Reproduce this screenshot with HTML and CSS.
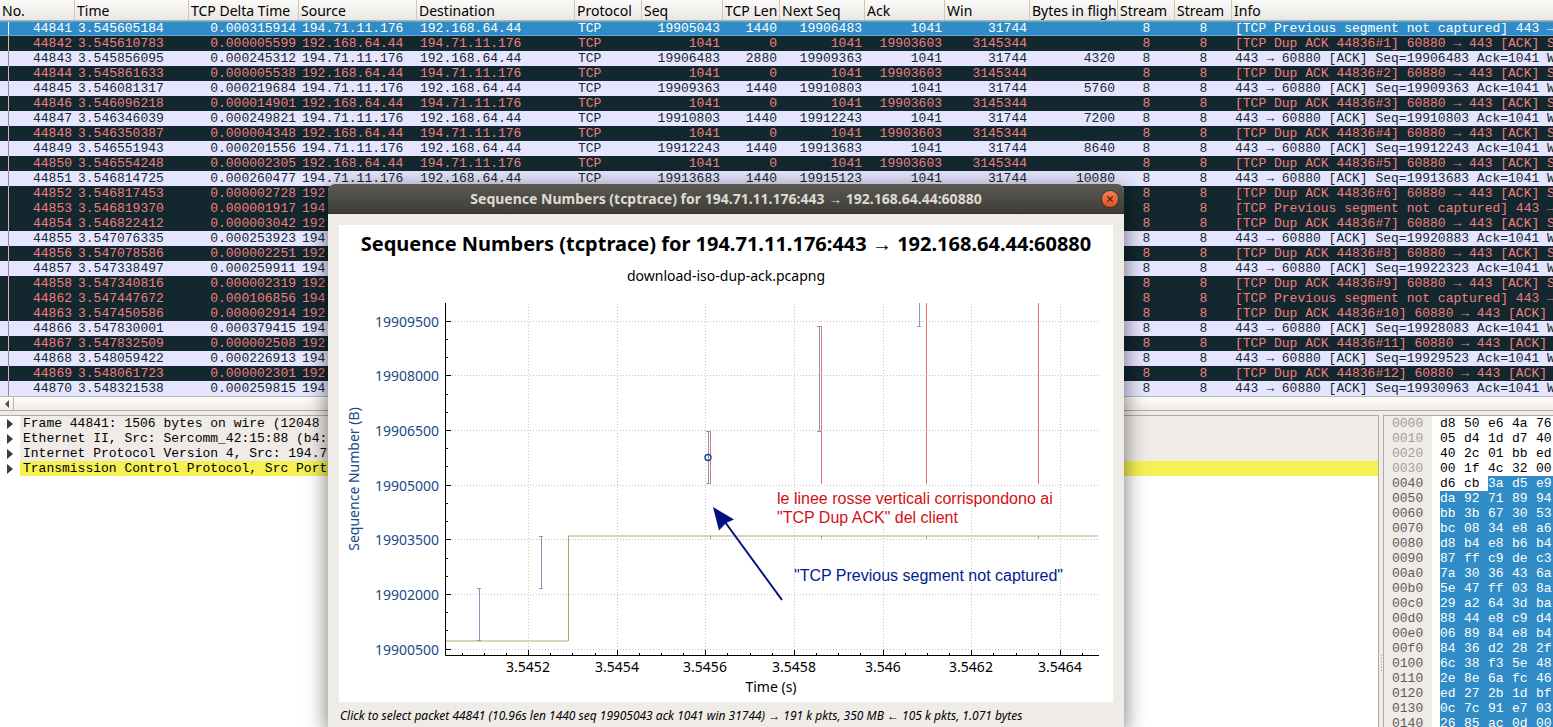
FILE: index.html
```
<!DOCTYPE html>
<html lang="it">
<head>
<meta charset="utf-8">
<title>Sequence Numbers (tcptrace)</title>
<link rel="stylesheet" href="styles.css">
</head>
<body>
<main class="app">
<section class="packets">
<table class="packet-list">
<colgroup><col class="w-no"><col class="w-time"><col class="w-delta"><col class="w-src"><col class="w-dst"><col class="w-proto"><col class="w-seq"><col class="w-len"><col class="w-next"><col class="w-ack"><col class="w-win"><col class="w-bytes"><col class="w-stream"><col class="w-stream"><col></colgroup>
<thead><tr><th>No.</th><th>Time</th><th>TCP Delta Time</th><th>Source</th><th>Destination</th><th>Protocol</th><th>Seq</th><th>TCP Len</th><th>Next Seq</th><th>Ack</th><th>Win</th><th>Bytes in flight</th><th>Stream</th><th>Stream</th><th>Info</th></tr></thead>
<tbody>
<tr class="selected"><td>44841<td>3.545605184<td>0.000315914<td>194.71.11.176<td>192.168.64.44<td>TCP<td>19905043<td>1440<td>19906483<td>1041<td>31744<td><td>8<td>8<td>[TCP Previous segment not captured] 443 → 60880</tr>
<tr class="bad"><td>44842<td>3.545610783<td>0.000005599<td>192.168.64.44<td>194.71.11.176<td>TCP<td>1041<td>0<td>1041<td>19903603<td>3145344<td><td>8<td>8<td>[TCP Dup ACK 44836#1] 60880 → 443 [ACK] Seq=1041</tr>
<tr><td>44843<td>3.545856095<td>0.000245312<td>194.71.11.176<td>192.168.64.44<td>TCP<td>19906483<td>2880<td>19909363<td>1041<td>31744<td>4320<td>8<td>8<td>443 → 60880 [ACK] Seq=19906483 Ack=1041 Win=31744</tr>
<tr class="bad"><td>44844<td>3.545861633<td>0.000005538<td>192.168.64.44<td>194.71.11.176<td>TCP<td>1041<td>0<td>1041<td>19903603<td>3145344<td><td>8<td>8<td>[TCP Dup ACK 44836#2] 60880 → 443 [ACK] Seq=1041</tr>
<tr><td>44845<td>3.546081317<td>0.000219684<td>194.71.11.176<td>192.168.64.44<td>TCP<td>19909363<td>1440<td>19910803<td>1041<td>31744<td>5760<td>8<td>8<td>443 → 60880 [ACK] Seq=19909363 Ack=1041 Win=31744</tr>
<tr class="bad"><td>44846<td>3.546096218<td>0.000014901<td>192.168.64.44<td>194.71.11.176<td>TCP<td>1041<td>0<td>1041<td>19903603<td>3145344<td><td>8<td>8<td>[TCP Dup ACK 44836#3] 60880 → 443 [ACK] Seq=1041</tr>
<tr><td>44847<td>3.546346039<td>0.000249821<td>194.71.11.176<td>192.168.64.44<td>TCP<td>19910803<td>1440<td>19912243<td>1041<td>31744<td>7200<td>8<td>8<td>443 → 60880 [ACK] Seq=19910803 Ack=1041 Win=31744</tr>
<tr class="bad"><td>44848<td>3.546350387<td>0.000004348<td>192.168.64.44<td>194.71.11.176<td>TCP<td>1041<td>0<td>1041<td>19903603<td>3145344<td><td>8<td>8<td>[TCP Dup ACK 44836#4] 60880 → 443 [ACK] Seq=1041</tr>
<tr><td>44849<td>3.546551943<td>0.000201556<td>194.71.11.176<td>192.168.64.44<td>TCP<td>19912243<td>1440<td>19913683<td>1041<td>31744<td>8640<td>8<td>8<td>443 → 60880 [ACK] Seq=19912243 Ack=1041 Win=31744</tr>
<tr class="bad"><td>44850<td>3.546554248<td>0.000002305<td>192.168.64.44<td>194.71.11.176<td>TCP<td>1041<td>0<td>1041<td>19903603<td>3145344<td><td>8<td>8<td>[TCP Dup ACK 44836#5] 60880 → 443 [ACK] Seq=1041</tr>
<tr><td>44851<td>3.546814725<td>0.000260477<td>194.71.11.176<td>192.168.64.44<td>TCP<td>19913683<td>1440<td>19915123<td>1041<td>31744<td>10080<td>8<td>8<td>443 → 60880 [ACK] Seq=19913683 Ack=1041 Win=31744</tr>
<tr class="bad"><td>44852<td>3.546817453<td>0.000002728<td>192.168.64.44<td><td><td><td><td><td><td><td><td>8<td>8<td>[TCP Dup ACK 44836#6] 60880 → 443 [ACK] Seq=1041</tr>
<tr class="bad"><td>44853<td>3.546819370<td>0.000001917<td>194.71.11.176<td><td><td><td><td><td><td><td><td>8<td>8<td>[TCP Previous segment not captured] 443 → 60880</tr>
<tr class="bad"><td>44854<td>3.546822412<td>0.000003042<td>192.168.64.44<td><td><td><td><td><td><td><td><td>8<td>8<td>[TCP Dup ACK 44836#7] 60880 → 443 [ACK] Seq=1041</tr>
<tr><td>44855<td>3.547076335<td>0.000253923<td>194.71.11.176<td><td><td><td><td><td><td><td><td>8<td>8<td>443 → 60880 [ACK] Seq=19920883 Ack=1041 Win=31744</tr>
<tr class="bad"><td>44856<td>3.547078586<td>0.000002251<td>192.168.64.44<td><td><td><td><td><td><td><td><td>8<td>8<td>[TCP Dup ACK 44836#8] 60880 → 443 [ACK] Seq=1041</tr>
<tr><td>44857<td>3.547338497<td>0.000259911<td>194.71.11.176<td><td><td><td><td><td><td><td><td>8<td>8<td>443 → 60880 [ACK] Seq=19922323 Ack=1041 Win=31744</tr>
<tr class="bad"><td>44858<td>3.547340816<td>0.000002319<td>192.168.64.44<td><td><td><td><td><td><td><td><td>8<td>8<td>[TCP Dup ACK 44836#9] 60880 → 443 [ACK] Seq=1041</tr>
<tr class="bad"><td>44862<td>3.547447672<td>0.000106856<td>194.71.11.176<td><td><td><td><td><td><td><td><td>8<td>8<td>[TCP Previous segment not captured] 443 → 60880</tr>
<tr class="bad"><td>44863<td>3.547450586<td>0.000002914<td>192.168.64.44<td><td><td><td><td><td><td><td><td>8<td>8<td>[TCP Dup ACK 44836#10] 60880 → 443 [ACK] Seq=1041</tr>
<tr><td>44866<td>3.547830001<td>0.000379415<td>194.71.11.176<td><td><td><td><td><td><td><td><td>8<td>8<td>443 → 60880 [ACK] Seq=19928083 Ack=1041 Win=31744</tr>
<tr class="bad"><td>44867<td>3.547832509<td>0.000002508<td>192.168.64.44<td><td><td><td><td><td><td><td><td>8<td>8<td>[TCP Dup ACK 44836#11] 60880 → 443 [ACK] Seq=1041</tr>
<tr><td>44868<td>3.548059422<td>0.000226913<td>194.71.11.176<td><td><td><td><td><td><td><td><td>8<td>8<td>443 → 60880 [ACK] Seq=19929523 Ack=1041 Win=31744</tr>
<tr class="bad"><td>44869<td>3.548061723<td>0.000002301<td>192.168.64.44<td><td><td><td><td><td><td><td><td>8<td>8<td>[TCP Dup ACK 44836#12] 60880 → 443 [ACK] Seq=1041</tr>
<tr><td>44870<td>3.548321538<td>0.000259815<td>194.71.11.176<td><td><td><td><td><td><td><td><td>8<td>8<td>443 → 60880 [ACK] Seq=19930963 Ack=1041 Win=31744</tr>
</tbody>
</table>
<div class="hscroll"><button class="scroll-left" type="button" aria-label="Scroll left"><svg width="4" height="8" viewBox="0 0 4 8"><path d="M4 0v8L0 4z" fill="#4c4c4c"/></svg></button></div>
</section>
<section class="panes">
<ul class="tree">
<li><button class="expander" type="button" aria-label="Expand"><svg width="6" height="10" viewBox="0 0 6 10"><path d="M0 0v10l6-5z"/></svg></button><span class="node">Frame 44841: 1506 bytes on wire (12048 bits)</span></li>
<li><button class="expander" type="button" aria-label="Expand"><svg width="6" height="10" viewBox="0 0 6 10"><path d="M0 0v10l6-5z"/></svg></button><span class="node">Ethernet II, Src: Sercomm_42:15:88 (b4:</span></li>
<li><button class="expander" type="button" aria-label="Expand"><svg width="6" height="10" viewBox="0 0 6 10"><path d="M0 0v10l6-5z"/></svg></button><span class="node">Internet Protocol Version 4, Src: 194.71.11.176</span></li>
<li><button class="expander" type="button" aria-label="Expand"><svg width="6" height="10" viewBox="0 0 6 10"><path d="M0 0v10l6-5z"/></svg></button><span class="node marked">Transmission Control Protocol, Src Port: 443</span></li>
</ul>
<div class="splitter"><svg width="3" height="17" viewBox="0 0 3 17"><path d="M1.500 0v17" stroke="#aaa59f" stroke-dasharray="1 2"/></svg></div>
<div class="hex-pane"><table class="hex">
<tr class="dim"><th>0000</th><td>d8<td>50<td>e6<td>4a<td>76</tr>
<tr class="dim"><th>0010</th><td>05<td>d4<td>1d<td>d7<td>40</tr>
<tr class="dim"><th>0020</th><td>40<td>2c<td>01<td>bb<td>ed</tr>
<tr class="dim"><th>0030</th><td>00<td>1f<td>4c<td>32<td>00</tr>
<tr><th>0040</th><td>d6<td>cb<td class="on">3a<td class="on">d5<td class="on">e9</tr>
<tr class="all"><th>0050</th><td>da<td>92<td>71<td>89<td>94</tr>
<tr class="all"><th>0060</th><td>bb<td>3b<td>67<td>30<td>53</tr>
<tr class="all"><th>0070</th><td>bc<td>08<td>34<td>e8<td>a6</tr>
<tr class="all"><th>0080</th><td>d8<td>b4<td>e8<td>b6<td>b4</tr>
<tr class="all"><th>0090</th><td>87<td>ff<td>c9<td>de<td>c3</tr>
<tr class="all"><th>00a0</th><td>7a<td>30<td>36<td>43<td>6a</tr>
<tr class="all"><th>00b0</th><td>5e<td>47<td>ff<td>03<td>8a</tr>
<tr class="all"><th>00c0</th><td>29<td>a2<td>64<td>3d<td>ba</tr>
<tr class="all"><th>00d0</th><td>88<td>44<td>e8<td>c9<td>d4</tr>
<tr class="all"><th>00e0</th><td>06<td>89<td>84<td>e8<td>b4</tr>
<tr class="all"><th>00f0</th><td>84<td>36<td>d2<td>28<td>2f</tr>
<tr class="all"><th>0100</th><td>6c<td>38<td>f3<td>5e<td>48</tr>
<tr class="all"><th>0110</th><td>2e<td>8e<td>6a<td>fc<td>46</tr>
<tr class="all"><th>0120</th><td>ed<td>27<td>2b<td>1d<td>bf</tr>
<tr class="all"><th>0130</th><td>0c<td>7c<td>91<td>e7<td>03</tr>
<tr class="all"><th>0140</th><td>26<td>85<td>ac<td>0d<td>00</tr>
</table></div>
</section>
</main>
<section class="dialog" role="dialog" aria-labelledby="dialog-title">
<header class="titlebar"><h1 id="dialog-title">Sequence Numbers (tcptrace) for 194.71.11.176:443 → 192.168.64.44:60880</h1>
<button class="close" type="button" aria-label="Close"><svg width="6" height="6" viewBox="0 0 6 6"><path d="M0 0l6 6M6 0L0 6" stroke="#5a2a14" stroke-width="1.300"/></svg></button></header>
<div class="dialog-body">
<svg class="chart" viewBox="339 225 774 477">
<g text-anchor="middle"><text class="chart-title" x="726" y="251">Sequence Numbers (tcptrace) for 194.71.11.176:443 → 192.168.64.44:60880</text>
<text x="726" y="281">download-iso-dup-ack.pcapng</text>
<text x="771" y="692">Time (s)</text>
<text class="blue" transform="translate(359 479) rotate(-90)">Sequence Number (B)</text>
<text x="528" y="672">3.5452</text><text x="617" y="672">3.5454</text><text x="705" y="672">3.5456</text><text x="794" y="672">3.5458</text><text x="883" y="672">3.546</text><text x="971" y="672">3.5462</text><text x="1060" y="672">3.5464</text></g>
<g class="blue" text-anchor="end"><text x="439" y="327">19909500</text><text x="439" y="381">19908000</text><text x="439" y="436">19906500</text><text x="439" y="491">19905000</text><text x="439" y="545">19903500</text><text x="439" y="600">19902000</text><text x="439" y="655">19900500</text></g>
<path class="grid" d="M452 321.500H1098M452 375.500H1098M452 430.500H1098M452 485.500H1098M452 539.500H1098M452 594.500H1098M452 649.500H1098M528.500 304V650M617.500 304V650M705.500 304V650M794.500 304V650M883.500 304V650M971.500 304V650M1060.500 304V650"/>
<path class="ack" d="M445 641H568M568 536H1098"/>
<path class="ack-edge" d="M568.500 536V641M710.500 536v3M821.500 536v3M926.500 536v3M1038.500 536v3"/>
<path class="seg" d="M479.500 588V641M477 588.500h4M477 640.500h4M541.500 536V589M539 536.500h4M539 588.500h4M708.500 431V484M706 431.500h5M706 483.500h5M819.500 326V432M817 326.500h5M817 431.500h4M919.500 303V327M917 326.500h4"/>
<path class="dup" d="M710.500 431V484M821.500 326V484M926.500 303V484M1038.500 303V484"/>
<circle cx="708" cy="457.500" r="3" fill="none" stroke="#204a87" stroke-width="1.400"/>
<path class="axis" d="M445.500 303V655.500H1099M445 321.500h6M445 375.500h6M445 430.500h6M445 485.500h6M445 539.500h6M445 594.500h6M445 649.500h6M445 339.500h3M445 357.500h3M445 394.500h3M445 412.500h3M445 448.500h3M445 466.500h3M445 503.500h3M445 521.500h3M445 558.500h3M445 576.500h3M445 612.500h3M445 630.500h3M528.500 655v-5M617.500 655v-5M705.500 655v-5M794.500 655v-5M883.500 655v-5M971.500 655v-5M1060.500 655v-5M462.500 655v-2M484.500 655v-2M506.500 655v-2M550.500 655v-2M572.500 655v-2M595.500 655v-2M639.500 655v-2M661.500 655v-2M683.500 655v-2M727.500 655v-2M750.500 655v-2M772.500 655v-2M816.500 655v-2M838.500 655v-2M860.500 655v-2M905.500 655v-2M927.500 655v-2M949.500 655v-2M993.500 655v-2M1016.500 655v-2M1038.500 655v-2M1082.500 655v-2"/>
<path d="M725 522L782 600" stroke="#001080" stroke-width="2"/><path d="M713 507L734 519.500L726 523L719 530.500z" fill="#001080"/>
<g class="note"><text x="777" y="504" fill="#d40f14">le linee rosse verticali corrispondono ai</text><text x="777" y="523" fill="#d40f14">"TCP Dup ACK" del client</text><text x="794" y="581" fill="#001a90">"TCP Previous segment not captured"</text></g>
</svg>
<p class="status">Click to select packet 44841 (10.96s len 1440 seq 19905043 ack 1041 win 31744) → 191 k pkts, 350 MB ← 105 k pkts, 1.071 bytes</p>
</div>
</section>
</body>
</html>
```
FILE: styles.css
```
* { box-sizing: border-box; }
body { margin: 0; height: 100vh; overflow: hidden; background: #efebe7; color: #000; font: 14px "Noto Sans", "Open Sans", sans-serif; }
button { border: 0; padding: 0; background: none; display: flex; align-items: center; justify-content: center; }
.app { height: 100vh; display: flex; flex-direction: column; gap: 4px; }
.packets { overflow: hidden; flex: none; }
table { border-collapse: separate; border-spacing: 0; }
.packet-list { table-layout: fixed; width: 100%; }
.w-no { width: 75px; } .w-time { width: 114px; } .w-delta { width: 110px; } .w-src { width: 118px; } .w-dst { width: 158px; }
.w-proto { width: 67px; } .w-seq { width: 81px; } .w-len { width: 57px; } .w-next { width: 85px; } .w-ack { width: 80px; }
.w-win { width: 85px; } .w-bytes { width: 88px; } .w-stream { width: 57px; }
.packet-list th { height: 21px; padding: 2px 0 0 2px; line-height: 18px; font-weight: 400; text-align: left; white-space: nowrap; overflow: hidden; background: linear-gradient(#fbfaf9, #eae7e3); border-right: 1px solid #cbc6bf; border-bottom: 1px solid #b5b0a9; }
.packet-list th:last-child { border-right: 0; }
.packet-list td { height: 15px; padding: 0 3px; font: 13px/15px "Liberation Mono", monospace; white-space: nowrap; overflow: hidden; text-align: right; background-color: #e6e5ff; color: #12272e; }
.packet-list td:nth-child(2), .packet-list td:nth-child(4), .packet-list td:nth-child(5), .packet-list td:nth-child(6), .packet-list td:last-child { text-align: left; }
.packet-list td:nth-child(13), .packet-list td:nth-child(14) { text-align: center; }
.packet-list .bad td { background-color: #12272e; color: #f07f7f; }
.packet-list .selected td { background-color: #308cc6; color: #fff; border-top: 1px solid #63a9d6; border-bottom: 1px solid #63a9d6; line-height: 13px; }
.packet-list td:first-child { background-image: linear-gradient(#8d8d96, #8d8d96); background-size: 1px 100%; background-position: 8px 0; background-repeat: no-repeat; }
.packet-list .bad td:first-child { background-image: linear-gradient(#f5a5a5, #f5a5a5); }
.packet-list .selected td:first-child { background-image: linear-gradient(#fff, #fff); }
.hscroll { height: 15px; border-top: 1px solid #bbb6b0; border-bottom: 1px solid #b0aba5; background: linear-gradient(#fdfdfc, #efece8); }
.scroll-left { width: 14px; height: 13px; border-right: 1px solid #bbb6b0; }
.panes { flex: 1; min-height: 0; display: flex; overflow: hidden; }
.tree { flex: 1; min-width: 0; margin: 0; padding: 0; list-style: none; background: #fff; border-top: 1px solid #b0aba5; border-right: 1px solid #b0aba5; font: 13px/15px "Liberation Mono", monospace; }
.tree li { display: flex; height: 15px; }
.expander { width: 20px; height: 15px; fill: #3c3c3c; }
.node { flex: 1; padding-left: 3px; white-space: nowrap; overflow: hidden; background: #efebe7; }
.node.marked { background: #f6f153; }
.splitter { width: 4px; display: flex; justify-content: center; align-items: flex-start; padding-top: 240px; }
.hex-pane { flex: none; width: 170px; overflow: hidden; border-top: 1px solid #b0aba5; border-left: 1px solid #b0aba5; background: #fff; }
.hex { width: 176px; table-layout: fixed; font: 13px/15px "Liberation Mono", monospace; }
.hex th { width: 56px; padding: 0 0 0 8px; font-weight: 400; text-align: left; color: #5c5c5c; background: linear-gradient(90deg, #efebe7 48px, #fff 48px); }
.hex .dim th { color: #a3a09d; }
.hex td { padding: 0; height: 15px; white-space: nowrap; }
.hex .on, .hex .all td { background: #308cc6; color: #fff; }
.dialog { position: absolute; left: 328px; top: 184px; width: 796px; border-radius: 7px 7px 0 0; background: #efebe7; box-shadow: 0 5px 22px rgba(0, 0, 0, .55); }
.titlebar { display: flex; align-items: center; height: 30px; padding: 0 6px 0 22px; border-radius: 7px 7px 0 0; border-bottom: 1px solid #33322e; background: linear-gradient(#5b5952, #3e3d39); }
.titlebar h1 { flex: 1; margin: 0; font-size: 14px; font-weight: 700; text-align: center; color: #dfdbd2; white-space: nowrap; }
.close { width: 16px; height: 16px; border-radius: 50%; background: linear-gradient(#f68056, #e2501f); box-shadow: 0 0 0 1px #37342f; }
.dialog-body { padding: 11px 11px 0; }
.chart { display: block; width: 100%; background: #fff; }
.chart text { font-size: 14px; }
.chart .chart-title { font-size: 20px; font-weight: 700; }
.chart .blue, .chart .blue text { fill: #204a87; }
.chart .note text { font: 16px "Liberation Sans", Arial, sans-serif; }
.chart path { fill: none; stroke-width: 1px; }
.chart path[fill] { fill: #001080; }
.chart path[stroke-width] { stroke-width: 2px; }
.grid { stroke: #c4c4c4; stroke-dasharray: 1 2; }
.axis { stroke: #000; }
.chart .ack { stroke: #ddd3b9; stroke-width: 2px; }
.ack-edge { stroke: #b8a26c; }
.seg { stroke: #8798bd; }
.dup { stroke: #e57373; }
.status { margin: 0; padding: 5px 1px 4px; font-size: 12px; line-height: 18px; font-style: italic; white-space: nowrap; }
```
